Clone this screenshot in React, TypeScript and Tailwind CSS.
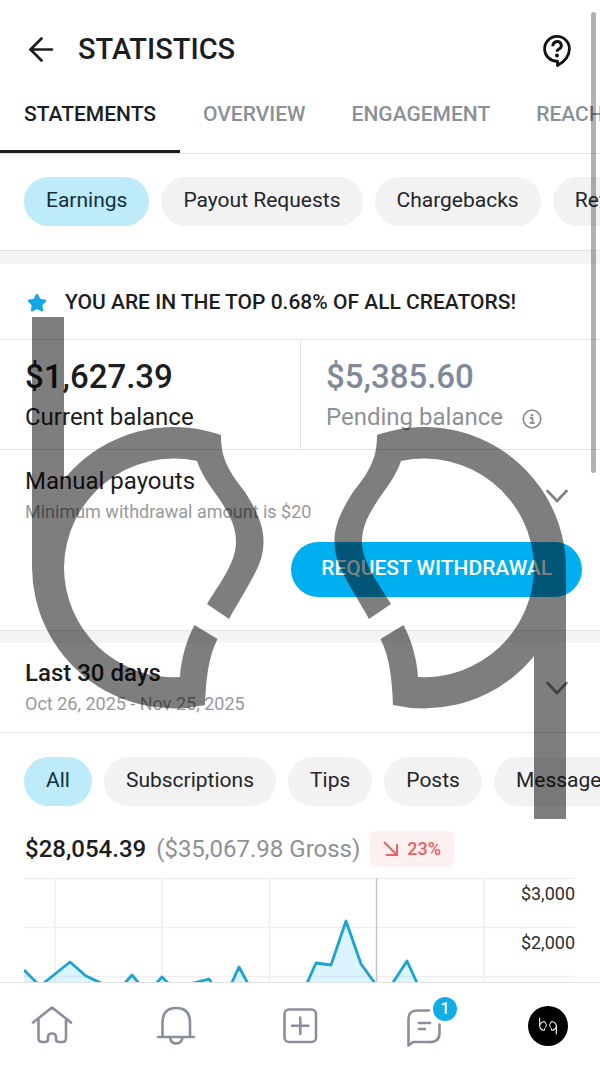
import type { ReactNode } from 'react';
import { Star } from 'lucide-react';

const TABS = ['STATEMENTS', 'OVERVIEW', 'ENGAGEMENT', 'REACH'];
const STATEMENT_FILTERS = ['Earnings', 'Payout Requests', 'Chargebacks', 'Referrals'];
const INCOME_FILTERS = ['All', 'Subscriptions', 'Tips', 'Posts', 'Messages'];

const EARNINGS =
  '0,92 16,108 31,96 46,84 62,98 77,105 92,115 108,97 123,115 138,99 154,115 169,105 185,101 200,122 215,89 230,117 246,125 261,125 276,121 292,85 307,87 322,43 337,86 353,108 368,106 383,83 399,118 414,130';

const BOWL =
  'M205 705A142 142 0 0 1 32 567A142 142 0 0 1 221 435C221 448 223 457 228 467C233 477 239 484 245 492C255 508 264 524 263.5 543C263 553 261 561 257 569C250 584 238 603 229 619L207 604C219 584 236 563 236 542C236 526 229 514 220 500C211 487 202 476 197 461A110 110 0 0 0 64 567A110 110 0 0 0 180 677C181 660 186 641 194.5 625L217.5 639C208 658 206 680 205 705Z';

function Mark() {
  return (
    <g fill="currentColor">
      <path d={BOWL} />
      <path d={BOWL} transform="translate(598 0) scale(-1 1)" />
      <path d="M32 317h32v250h-32zM534 567h32v252h-32z" />
    </g>
  );
}

function Chips({ items, label }: { items: string[]; label: string }) {
  return (
    <div className="flex gap-3 overflow-hidden pl-6" role="group" aria-label={label}>
      {items.map((item, i) => (
        <button
          key={item}
          type="button"
          className={
            i === 0
              ? 'h-[49px] shrink-0 rounded-full bg-[#bdebfa] px-[22px] pb-px text-[21px] text-[#14303c]'
              : 'h-[49px] shrink-0 rounded-full bg-[#f2f2f2] px-[22px] pb-px text-[21px] text-[#242528]'
          }
        >
          {item}
        </button>
      ))}
    </div>
  );
}

function Chevron() {
  return (
    <svg width="22" height="14" viewBox="0 0 22 14" fill="none" stroke="currentColor" strokeWidth="2.6" strokeLinecap="round">
      <path d="M1.5 2L11 12L20.5 2" />
    </svg>
  );
}

function NavIcon({ children }: { children: ReactNode }) {
  return (
    <svg
      className="size-10 overflow-visible"
      viewBox="0 0 40 40"
      fill="none"
      stroke="currentColor"
      strokeWidth="2.6"
      strokeLinecap="round"
      strokeLinejoin="round"
    >
      {children}
    </svg>
  );
}

function Header() {
  return (
    <header className="pt-6">
      <div className="flex h-[50px] items-center px-7">
        <button type="button" aria-label="Back">
          <svg width="26" height="26" viewBox="0 0 26 26" fill="none" stroke="#1c1d1f" strokeWidth="2.7" strokeLinecap="round">
            <path d="M13.5 2.5L2.5 13.5L13.5 24.5M2.5 13.5H24" />
          </svg>
        </button>
        <h1 className="ml-6 flex-1 pt-0.5 text-[29px] font-medium">STATISTICS</h1>
        <button type="button" aria-label="Help">
          <svg className="mt-1" width="30" height="34" viewBox="0 0 30 34" fill="none" stroke="#111" strokeWidth="2.8">
            <path d="M15.500 31.500V27.200A12.400 12.400 0 1 1 27.400 14.800C27.400 22 22 28 15.500 31.500Z" strokeLinejoin="round" />
            <path d="M11 12.200A4.200 3.900 0 1 1 17 15C15.600 15.800 15 16.300 15 17.800" strokeWidth="3" />
            <circle cx="15" cy="21.500" r="2" fill="#111" stroke="none" />
          </svg>
        </button>
      </div>
      <nav className="flex h-20 overflow-hidden border-b border-[#e2e3e4] text-[21px] font-medium">
        {TABS.map((tab, i) => (
          <a
            key={tab}
            href="#"
            className={
              i === 0
                ? 'flex shrink-0 items-center border-b-3 border-[#1c1d1f] px-6 pt-[5px]'
                : 'flex shrink-0 items-center px-[23px] pt-0.5 text-[#8a9097]'
            }
          >
            {tab}
          </a>
        ))}
      </nav>
    </header>
  );
}

function Balances() {
  return (
    <div className="grid grid-cols-2 border-y border-[#e2e3e4]">
      <div className="h-[109px] pt-[15px] pl-[25px]">
        <p className="text-[33px] leading-[44px] font-medium">$1,627.39</p>
        <p className="text-2xl leading-9">Current balance</p>
      </div>
      <div className="h-[109px] border-l border-[#e2e3e4] pt-[15px] pl-[25px]">
        <p className="text-[33px] leading-[44px] font-medium text-[#7f8a98]">$5,385.60</p>
        <p className="flex items-center text-2xl leading-9 text-[#8d9196]">
          Pending balance
          <svg className="mt-1 ml-[19px]" width="20" height="20" viewBox="0 0 20 20" fill="none" stroke="currentColor" strokeWidth="1.8">
            <circle cx="10" cy="10" r="8.8" />
            <path d="M8 9h2.400v5M7.600 14h5" />
            <circle cx="10" cy="6" r="1.3" fill="currentColor" stroke="none" />
          </svg>
        </p>
      </div>
    </div>
  );
}

function Payouts() {
  return (
    <section className="pb-[33px]">
      <div className="flex items-center justify-between pt-[15px] pr-8 pl-[25px]">
        <div>
          <h2 className="text-2xl leading-8">Manual payouts</h2>
          <p className="text-lg leading-[30px] text-[#97999c]">Minimum withdrawal amount is $20</p>
        </div>
        <button type="button" aria-label="Show payout options" className="text-[#7d8186]">
          <Chevron />
        </button>
      </div>
      <div className="flex justify-end pt-[15px] pr-[18px]">
        <button type="button" className="h-[55px] rounded-full bg-[#00aff0] px-[30px] pb-px text-[21px] font-medium text-white">
          REQUEST WITHDRAWAL
        </button>
      </div>
    </section>
  );
}

function EarningsChart() {
  return (
    <svg className="block w-full" viewBox="0 0 551 104" role="img" aria-label="Earnings over the last 30 days">
      <g stroke="#efefef" strokeWidth="1.5">
        <path d="M0 .5H551M0 49.5H551M0 98.5H551M31 0V104M138 0V104M245.500 0V104M460 0V104" />
      </g>
      <path d="M352.500 0V104" stroke="#c4c4c4" strokeWidth="1.5" />
      <polygon points={`0,140 ${EARNINGS} 414,140`} fill="#00aff0" fillOpacity=".14" />
      <polyline points={EARNINGS} fill="none" stroke="#1ba3d6" strokeWidth="2.8" strokeLinejoin="round" />
      <g fill="#2c2d30" fontSize="18" textAnchor="end">
        <text x="551" y="22">$3,000</text>
        <text x="551" y="71">$2,000</text>
      </g>
    </svg>
  );
}

function BottomNav() {
  return (
    <nav className="relative flex justify-between border-t border-[#e0e2e4] bg-white px-8 pt-[23px] pb-[21px] text-[#8a8f9b]">
      <a href="#" aria-label="Home">
        <NavIcon>
          <path d="M1 16.500L20 1.500L39 16.500M6.500 13V32Q6.500 36 10 36H13Q16 36 16 33V31Q16 27.500 20 27.500Q24 27.500 24 31V33Q24 36 27 36H30.500Q34 36 34 32V13" />
        </NavIcon>
      </a>
      <a href="#" aria-label="Notifications">
        <NavIcon>
          <path d="M2 31H38M6.500 31V16.500Q6.500 2 20 2Q34 2 34 16.500V31M14 31.500Q15 37.500 20 37.500Q25.500 37.500 26.500 31.500" />
        </NavIcon>
      </a>
      <a href="#" aria-label="New post">
        <NavIcon>
          <rect x="4.500" y="3.500" width="31.500" height="32.500" rx="4.500" />
          <path d="M20.300 11.500V28M12 19.700H28.500" />
        </NavIcon>
      </a>
      <a href="#" aria-label="Messages, 1 unread" className="relative">
        <NavIcon>
          <path d="M25 4.500H13Q4.500 4.500 4.500 13V39.500L9 36H26Q35.500 36 35.500 27V18.500M15 17H26M15 23H21" />
        </NavIcon>
        <span className="absolute -top-[9px] left-[29px] flex size-6 items-center justify-center rounded-full bg-[#12ace6] text-base font-medium text-white">
          1
        </span>
      </a>
      <a href="#" aria-label="Profile" className="flex size-10 items-center justify-center rounded-full bg-black text-white">
        <svg width="18" height="18" viewBox="28 314 542 508">
          <Mark />
        </svg>
      </a>
    </nav>
  );
}

export default function App() {
  return (
    <div className="relative flex h-screen flex-col overflow-hidden bg-white font-['Roboto',sans-serif] text-[#1c1d1f]">
      <main className="min-h-0 flex-1 overflow-hidden">
        <Header />
        <div className="border-b border-[#e2e3e4] pt-[23px] pb-6">
          <Chips items={STATEMENT_FILTERS} label="Statement type" />
        </div>
        <div className="h-[13px] bg-[#f4f4f4]" />
        <div className="flex h-[75px] items-center gap-[18px] pt-0.5 pl-[27px]">
          <Star className="size-5 fill-[#10a9e6] text-[#10a9e6]" />
          <p className="text-[21px] font-medium">YOU ARE IN THE TOP 0.68% OF ALL CREATORS!</p>
        </div>
        <Balances />
        <Payouts />
        <div className="h-[13px] border-t border-[#e2e3e4] bg-[#f4f4f4]" />
        <section className="flex items-center justify-between border-b border-[#e2e3e4] pt-[14px] pr-8 pb-[13px] pl-[25px]">
          <div>
            <h2 className="text-2xl leading-8 font-medium">Last 30 days</h2>
            <p className="text-lg leading-[30px] text-[#97999c]">Oct 26, 2025 - Nov 25, 2025</p>
          </div>
          <button type="button" aria-label="Change period" className="text-[#7d8186]">
            <Chevron />
          </button>
        </section>
        <div className="pt-6">
          <Chips items={INCOME_FILTERS} label="Income type" />
        </div>
        <div className="flex h-[72px] items-center pt-[13px] pl-[25px] text-2xl">
          <strong className="font-medium">$28,054.39</strong>
          <span className="ml-[10px] text-[#8d9196]">($35,067.98 Gross)</span>
          <span className="ml-[10px] flex h-9 items-center gap-2 rounded-md bg-[#fdf0f0] px-[13px] text-lg font-medium text-[#ec5f62]">
            <svg width="16" height="16" viewBox="0 0 16 16" fill="none" stroke="currentColor" strokeWidth="2">
              <path d="M1 1L14 14M14 3V14H3" />
            </svg>
            23%
          </span>
        </div>
        <div className="pr-[25px] pl-6">
          <EarningsChart />
        </div>
      </main>
      <BottomNav />
      <div className="pointer-events-none absolute top-3 right-1 h-[461px] w-[5px] rounded-full bg-black/30" />
      <svg className="pointer-events-none absolute top-0 left-0 w-full text-black opacity-50" viewBox="0 0 600 1067" aria-hidden="true">
        <Mark />
      </svg>
    </div>
  );
}
